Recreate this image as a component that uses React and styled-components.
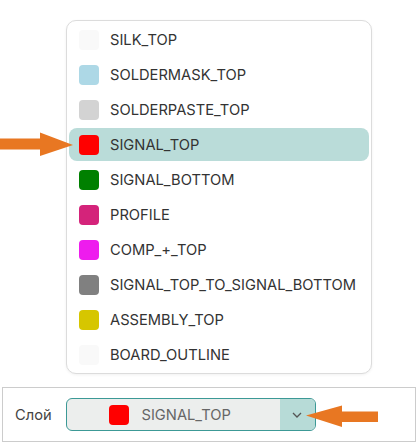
import React from "react";
import styled, { createGlobalStyle } from "styled-components";

const GlobalStyle = createGlobalStyle`
  html, body {
    margin: 0;
    padding: 0;
    background: #ffffff;
    font-family: "Inter", "Roboto", sans-serif;
  }
`;

const Page = styled.div`
  position: relative;
  width: 418px;
  height: 443px;
  overflow: hidden;
  padding-top: 20px;
  box-sizing: border-box;
`;

const Menu = styled.ul`
  list-style: none;
  margin: 0 0 0 66px;
  padding: 2px;
  width: 306px;
  box-sizing: border-box;
  border: 1px solid #dcdcdc;
  border-radius: 10px;
  background: #fff;
  box-shadow: 0 1px 3px rgba(0, 0, 0, 0.06);
  display: flex;
  flex-direction: column;
  gap: 2px;
`;

const Item = styled.li`
  height: 33px;
  display: flex;
  align-items: center;
  gap: 11px;
  padding-left: 10px;
  border-radius: 8px;
  background: ${(p) => (p.$active ? "#badcd9" : "transparent")};
  color: #333;
  font-size: 14.7px;
`;

const Swatch = styled.span`
  width: 20px;
  height: 20px;
  border-radius: 4px;
  background: ${(p) => p.$color};
  flex-shrink: 0;
`;

const Bar = styled.div`
  margin: 13px 0 0 2px;
  width: 414px;
  height: 55px;
  box-sizing: border-box;
  border: 1px solid #cccccc;
  display: flex;
  align-items: center;
  gap: 14px;
  padding-left: 12px;
`;

const Label = styled.span`
  font-size: 14.7px;
  color: #444;
`;

const Select = styled.div`
  width: 250px;
  height: 33px;
  box-sizing: border-box;
  border: 1px solid #3c9996;
  border-radius: 6px;
  background: #eceeed;
  display: flex;
  overflow: hidden;
`;

const Value = styled.div`
  flex: 1;
  display: flex;
  align-items: center;
  justify-content: center;
  gap: 12px;
  padding-right: 6px;
  color: #666;
  font-size: 14.7px;
`;

const Toggle = styled.div`
  width: 35px;
  background: #b7dbd7;
  display: flex;
  align-items: center;
  justify-content: center;
`;

const Arrow = styled.svg`
  position: absolute;
  left: ${(p) => p.$x}px;
  top: ${(p) => p.$y}px;
`;

const layers = [
  ["SILK_TOP", "#f9f9f9"],
  ["SOLDERMASK_TOP", "#add8e6"],
  ["SOLDERPASTE_TOP", "#d3d3d3"],
  ["SIGNAL_TOP", "#ff0000"],
  ["SIGNAL_BOTTOM", "#008000"],
  ["PROFILE", "#d4237a"],
  ["COMP_+_TOP", "#ee1cee"],
  ["SIGNAL_TOP_TO_SIGNAL_BOTTOM", "#808080"],
  ["ASSEMBLY_TOP", "#d6c600"],
  ["BOARD_OUTLINE", "#f9f9f9"],
];

export default function App() {
  return (
    <>
      <GlobalStyle />
      <Page>
        <Menu>
          {layers.map(([name, color]) => (
            <Item key={name} $active={name === "SIGNAL_TOP"}>
              <Swatch $color={color} />
              {name}
            </Item>
          ))}
        </Menu>
        <Bar>
          <Label>Слой</Label>
          <Select>
            <Value>
              <Swatch $color="#ff0000" />
              SIGNAL_TOP
            </Value>
            <Toggle>
              <svg width="10" height="6" viewBox="0 0 10 6">
                <path d="M1 1l4 4 4-4" fill="none" stroke="#555" strokeWidth="1.3" />
              </svg>
            </Toggle>
          </Select>
        </Bar>
        <Arrow $x={0} $y={132} width="74" height="24" viewBox="0 0 74 24">
          <path d="M0 6.5h40V0.5l33 12.5-33 11v-6.5H0z" fill="#e87722" />
        </Arrow>
        <Arrow $x={306} $y={405} width="73" height="22" viewBox="0 0 73 22">
          <path d="M0 10.5L36 0.5v6h36v10.5H36v5z" fill="#e87722" />
        </Arrow>
      </Page>
    </>
  );
}
